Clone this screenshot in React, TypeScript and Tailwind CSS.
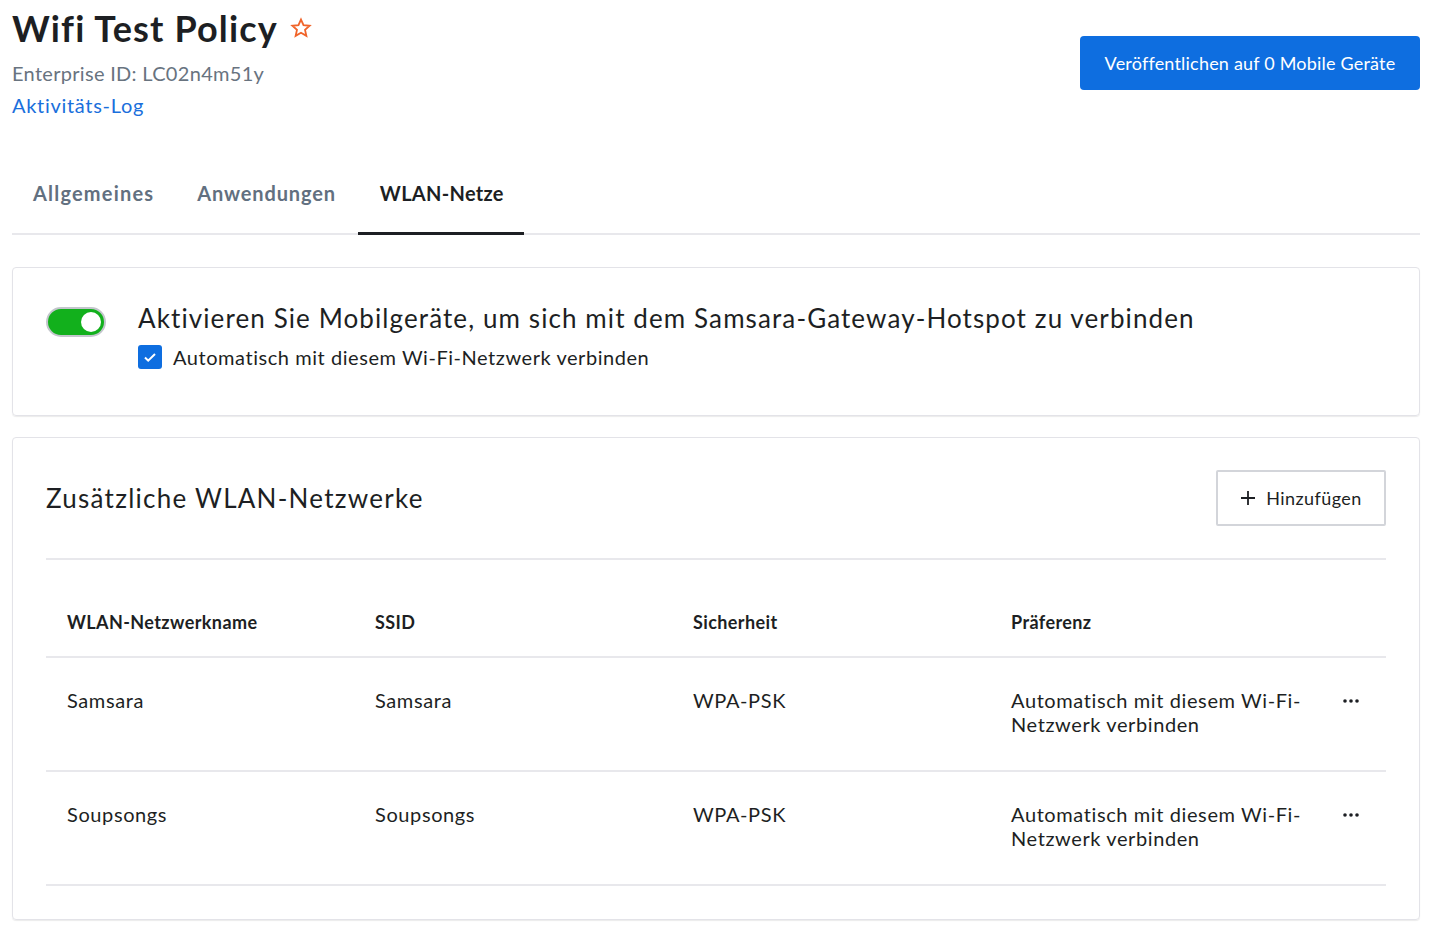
import React from 'react'

const StarIcon = () => (
  <svg width="22" height="22" viewBox="0 0 24 24" fill="none" stroke="#f0642a" strokeWidth="2" strokeLinejoin="miter">
    <path d="M12 2.8l2.75 6.1 6.65.65-5 4.45 1.45 6.55L12 17.2l-5.85 3.35 1.45-6.55-5-4.45 6.65-.65z" />
  </svg>
)

const DotsIcon = () => (
  <svg width="18" height="6" viewBox="0 0 18 6" fill="#1d1f23">
    <circle cx="3" cy="3" r="1.8" />
    <circle cx="9" cy="3" r="1.8" />
    <circle cx="15" cy="3" r="1.8" />
  </svg>
)

interface Network {
  name: string
  ssid: string
  security: string
  preference: string
}

const networks: Network[] = [
  { name: 'Samsara', ssid: 'Samsara', security: 'WPA-PSK', preference: 'Automatisch mit diesem Wi-Fi-Netzwerk verbinden' },
  { name: 'Soupsongs', ssid: 'Soupsongs', security: 'WPA-PSK', preference: 'Automatisch mit diesem Wi-Fi-Netzwerk verbinden' },
]

const cols = 'grid grid-cols-[308px_318px_318px_300px_1fr] pl-[21px]'

const App = () => {
  return (
    <div className="min-h-screen bg-white pl-3 pr-[10px] text-[#1d1f23]" style={{ fontFamily: 'Lato, "Noto Sans", sans-serif' }}>
      {/* header */}
      <div className="flex justify-between items-start">
        <div>
          <div className="flex items-center gap-3 pt-[6px]">
            <h1 className="text-[36px] leading-[44px] font-bold tracking-[1.15px]">Wifi Test Policy</h1>
            <StarIcon />
          </div>
          <p className="mt-[10px] text-[20px] leading-[26px] text-[#68737f] tracking-[0.3px]">Enterprise ID: LC02n4m51y</p>
          <a className="block mt-[6px] text-[20px] leading-[26px] text-[#1a6fdc] tracking-[0.7px]">Aktivitäts-Log</a>
        </div>
        <button className="mt-9 h-[54px] w-[340px] rounded bg-[#0e6ee0] text-white text-[18px] tracking-[0.2px]">
          Veröffentlichen auf 0 Mobile Geräte
        </button>
      </div>

      {/* tabs */}
      <div className="mt-[60px] flex border-b-2 border-[#e8e8ec] text-[20px] font-bold">
        <div className="px-[21px] pb-[25px] text-[#627080] tracking-[1.2px]">Allgemeines</div>
        <div className="px-[22px] pb-[25px] text-[#627080] tracking-[0.85px]">Anwendungen</div>
        <div className="pl-[22px] pr-[20px] pb-[23px] border-b-[3px] border-[#1d1f23] -mb-[2px] tracking-[0.3px]">WLAN-Netze</div>
      </div>

      {/* wifi toggle card */}
      <div className="mt-8 rounded border border-[#e3e3e8] shadow-[0_1px_1px_rgba(0,0,0,0.08)] pl-[33px] pt-[34px] pb-[45px] flex">
        <div className="mt-[5px] w-[60px] h-[30px] rounded-full bg-[#12b01c] border-2 border-[#c3c6cc] relative shrink-0">
          <div className="absolute right-[3px] top-[3px] w-5 h-5 rounded-full bg-white" />
        </div>
        <div className="ml-8">
          <p className="text-[26px] leading-[32px] tracking-[1.1px]">
            Aktivieren Sie Mobilgeräte, um sich mit dem Samsara-Gateway-Hotspot zu verbinden
          </p>
          <label className="mt-[10px] flex items-center gap-[11px]">
            <span className="w-6 h-6 rounded-[3px] bg-[#0e6ee0] flex items-center justify-center">
              <svg width="16" height="16" viewBox="0 0 16 16" fill="none" stroke="white" strokeWidth="2">
                <path d="M3 8.5l3.2 3.2L13 5" />
              </svg>
            </span>
            <span className="text-[20px] leading-[26px] tracking-[0.55px]">Automatisch mit diesem Wi-Fi-Netzwerk verbinden</span>
          </label>
        </div>
      </div>

      {/* networks card */}
      <div className="mt-[21px] rounded border border-[#e3e3e8] shadow-[0_1px_1px_rgba(0,0,0,0.08)] px-[33px] pt-[32px] pb-[33px]">
        <div className="flex justify-between items-center pb-[32px] border-b-2 border-[#e8e8ec]">
          <h2 className="text-[26px] leading-[32px] tracking-[1.25px]">Zusätzliche WLAN-Netzwerke</h2>
          <button className="h-[56px] w-[170px] border-2 border-[#d3d5da] rounded-[2px] flex items-center justify-center gap-[10px] text-[18px] tracking-[0.4px]">
            <svg width="16" height="16" viewBox="0 0 16 16" stroke="#1d1f23" strokeWidth="1.8">
              <path d="M8 1v14M1 8h14" />
            </svg>
            Hinzufügen
          </button>
        </div>

        <div className={`${cols} pt-[51px] pb-[23px] border-b-2 border-[#e8e8ec] text-[18px] leading-[22px] font-bold tracking-[0.4px]`}>
          <div>WLAN-Netzwerkname</div>
          <div>SSID</div>
          <div>Sicherheit</div>
          <div>Präferenz</div>
          <div />
        </div>

        {networks.map((n) => (
          <div key={n.name} className={`${cols} pt-[30px] pb-[34px] border-b-2 border-[#e8e8ec] text-[20px] leading-[24px] tracking-[0.6px]`}>
            <div>{n.name}</div>
            <div>{n.ssid}</div>
            <div>{n.security}</div>
            <div className="pr-2">{n.preference}</div>
            <div className="pl-[31px] pt-[10px]">
              <DotsIcon />
            </div>
          </div>
        ))}
      </div>
    </div>
  )
}

export default App
